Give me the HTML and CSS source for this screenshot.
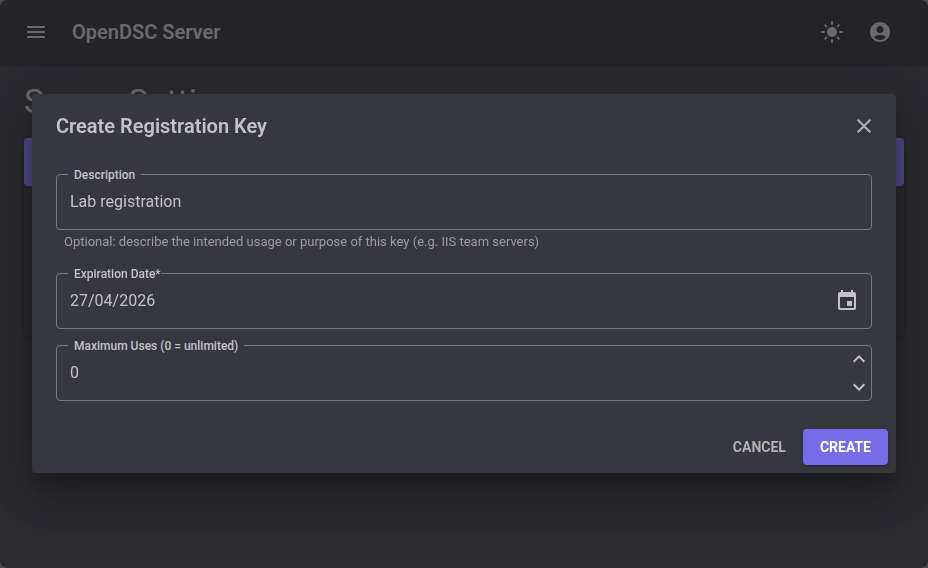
FILE: index.html
```html
<!DOCTYPE html>
<html lang="en">
<head>
    <meta charset="UTF-8">
    <meta name="viewport" content="width=device-width, initial-scale=1.0">
    <title>OpenDSC Server</title>
    <link rel="stylesheet" href="styles.css">
</head>
<body>

    <div class="app">
        <!-- App bar -->
        <header class="appbar">
            <button class="icon-button" type="button" aria-label="Menu">
                <svg class="icon" viewBox="0 0 24 24"><path d="M3 18h18v-2H3v2zm0-5h18v-2H3v2zm0-7v2h18V6H3z"/></svg>
            </button>
            <div class="appbar-title">OpenDSC Server</div>
            <button class="icon-button" type="button" aria-label="Light mode">
                <svg class="icon" viewBox="0 0 24 24">
                    <circle cx="12" cy="12" r="5"/>
                    <path class="rays" d="M12 2v2M12 20v2M2 12h2M20 12h2M5.3 5.3l1.1 1.1M17.6 17.6l1.1 1.1M5.3 18.7l1.1-1.1M17.6 6.4l1.1-1.1"/>
                </svg>
            </button>
            <button class="icon-button" type="button" aria-label="Account">
                <svg class="icon" viewBox="0 0 24 24"><path fill-rule="evenodd" d="M12 2C6.48 2 2 6.48 2 12s4.48 10 10 10 10-4.48 10-10S17.52 2 12 2zm0 4c1.93 0 3.5 1.57 3.5 3.5S13.93 13 12 13s-3.5-1.57-3.5-3.5S10.07 6 12 6zm0 14c-2.03 0-4.43-.82-6.14-2.88C7.55 15.8 9.68 15 12 15s4.45.8 6.14 2.12C16.43 19.18 14.03 20 12 20z"/></svg>
            </button>
        </header>

        <!-- Page behind the dialog -->
        <main class="main">
            <h1 class="page-title">Server Settings</h1>
            <div class="tabs">
                <div class="tabs-bar"></div>
                <div class="tabs-panel"></div>
            </div>
        </main>
    </div>

    <!-- Dialog -->
    <div class="overlay">
        <form class="dialog" role="dialog" aria-labelledby="dialogTitle">
            <div class="dialog-header">
                <h2 class="dialog-title" id="dialogTitle">Create Registration Key</h2>
                <button class="close-button" type="button" aria-label="Close">
                    <svg class="icon" viewBox="0 0 24 24"><path d="M19 6.41 17.59 5 12 10.59 6.41 5 5 6.41 10.59 12 5 17.59 6.41 19 12 13.41 17.59 19 19 17.59 13.41 12z"/></svg>
                </button>
            </div>

            <div class="dialog-content">
                <div class="field">
                    <div class="field-box">
                        <label class="field-label" for="description">Description</label>
                        <input class="field-input" type="text" id="description" value="Lab registration">
                    </div>
                    <div class="field-help">Optional: describe the intended usage or purpose of this key (e.g. IIS team servers)</div>
                </div>

                <div class="field">
                    <div class="field-box">
                        <label class="field-label field-label-required" for="expiration">Expiration Date*</label>
                        <input class="field-input" type="text" id="expiration" value="27/04/2026">
                        <button class="icon-button" type="button" aria-label="Open calendar">
                            <svg class="icon" viewBox="0 0 24 24"><path d="M17 12h-5v5h5v-5zM16 1v2H8V1H6v2H5c-1.11 0-1.99.9-1.99 2L3 19c0 1.1.89 2 2 2h14c1.1 0 2-.9 2-2V5c0-1.1-.9-2-2-2h-1V1h-2zm3 18H5V8h14v11z"/></svg>
                        </button>
                    </div>
                </div>

                <div class="field">
                    <div class="field-box">
                        <label class="field-label" for="maxUses">Maximum Uses (0 = unlimited)</label>
                        <input class="field-input" type="text" inputmode="numeric" id="maxUses" value="0">
                        <div class="spinner">
                            <button class="spin-button" type="button" aria-label="Increase">
                                <svg class="icon" viewBox="0 0 24 24"><path d="M12 8l-6 6 1.41 1.41L12 10.83l4.59 4.58L18 14z"/></svg>
                            </button>
                            <button class="spin-button" type="button" aria-label="Decrease">
                                <svg class="icon" viewBox="0 0 24 24"><path d="M16.59 8.59L12 13.17 7.41 8.59 6 10l6 6 6-6z"/></svg>
                            </button>
                        </div>
                    </div>
                </div>
            </div>

            <div class="dialog-actions">
                <button class="button" type="button">Cancel</button>
                <button class="button button-primary" type="button">Create</button>
            </div>
        </form>
    </div>

</body>
</html>
```
FILE: styles.css
```css
* {
    box-sizing: border-box;
}

html {
    background: #4a4a4c;
}

body {
    margin: 0;
    font-family: Roboto, "Liberation Sans", sans-serif;
    font-size: 14px;
    color: #b2b2b2;
}

button {
    border: none;
    background: none;
    color: inherit;
    font-family: inherit;
    cursor: pointer;
}

/* App */
.app {
    min-height: 100vh;
    background: #32333d;
    border-radius: 8px;
    overflow: hidden;
}

.appbar {
    display: flex;
    align-items: center;
    height: 64px;
    padding: 0 24px 0 12px;
    background: #27272f;
    box-shadow: 0 2px 1px rgba(0, 0, 0, 0.2);
}

.appbar-title {
    flex: 1;
    margin-left: 12px;
    font-size: 20px;
    font-weight: 600;
}

.icon-button {
    display: flex;
    padding: 12px;
}

.icon {
    width: 24px;
    height: 24px;
    fill: currentColor;
}

.rays {
    stroke: currentColor;
    stroke-width: 2;
    stroke-linecap: round;
}

.main {
    padding: 16px 24px;
}

.page-title {
    margin: 0 0 16px;
    font-size: 34px;
    font-weight: 400;
    line-height: 42px;
}

.tabs {
    border-radius: 4px;
    background: #323238;
    box-shadow: 0 2px 4px rgba(0, 0, 0, 0.3);
}

.tabs-bar {
    height: 48px;
    border-radius: 4px;
    background: #776be7;
}

.tabs-panel {
    height: 150px;
}

/* Dialog */
.overlay {
    position: fixed;
    inset: 0;
    display: flex;
    align-items: center;
    padding: 32px 32px 33px;
    border-radius: 8px;
    background: rgba(33, 33, 33, 0.5);
}

.dialog {
    flex: 1;
    border-radius: 4px;
    background: #373740;
    box-shadow: 0 11px 15px -7px rgba(0, 0, 0, 0.2), 0 24px 38px 3px rgba(0, 0, 0, 0.14), 0 9px 46px 8px rgba(0, 0, 0, 0.12);
}

.dialog-header {
    display: flex;
    align-items: center;
    justify-content: space-between;
    padding: 16px 20px 16px 24px;
}

.dialog-title {
    margin: 0;
    font-size: 20px;
    font-weight: 600;
    line-height: 32px;
    color: #c3c3c6;
}

.close-button {
    display: flex;
    padding: 0;
}

.dialog-content {
    display: flex;
    flex-direction: column;
    gap: 16px;
    padding: 16px 24px 20px;
}

.field-box {
    position: relative;
    display: flex;
    align-items: center;
    height: 56px;
    border: 1px solid #78787d;
    border-radius: 4px;
    color: #c3c3c6;
}

.field-label {
    position: absolute;
    top: -8px;
    left: 11px;
    padding: 0 6px;
    background: #373740;
    font-size: 12px;
    font-weight: 500;
    line-height: 16px;
}

.field-label-required {
    padding-right: 0;
}

.field-input {
    flex: 1;
    min-width: 0;
    padding: 0 13px;
    border: none;
    outline: none;
    background: none;
    color: inherit;
    font-family: inherit;
    font-size: 16px;
    line-height: 20px;
}

.field-help {
    padding: 3px 8px 6px;
    font-size: 13px;
    line-height: 18px;
    color: #9c9ca0;
}

.spinner {
    display: flex;
    flex-direction: column;
    gap: 4px;
}

.spin-button {
    display: flex;
    padding: 0;
}

.dialog-actions {
    display: flex;
    justify-content: flex-end;
    gap: 8px;
    padding: 8px;
}

.button {
    padding: 6px 9px;
    border-radius: 4px;
    font-size: 14px;
    font-weight: 700;
    line-height: 24px;
    text-transform: uppercase;
}

.button-primary {
    padding: 6px 17px;
    background: #776be7;
    color: #fff;
    box-shadow: 0 3px 1px -2px rgba(0, 0, 0, 0.2), 0 2px 2px rgba(0, 0, 0, 0.14), 0 1px 5px rgba(0, 0, 0, 0.12);
}
```
